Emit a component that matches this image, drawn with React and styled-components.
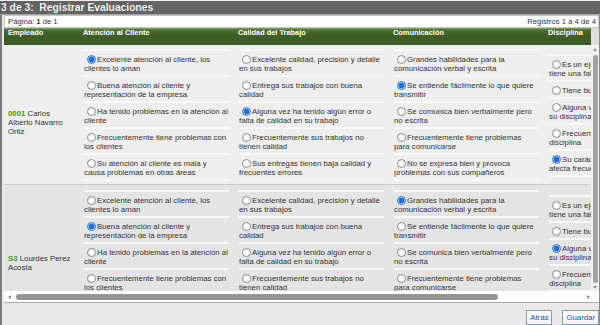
import React from 'react';
import styled, { createGlobalStyle } from 'styled-components';

const GlobalStyle = createGlobalStyle`
  html, body {
    margin: 0;
    padding: 0;
    background: #e9e9e9;
  }
  body {
    font-family: "Liberation Sans", Arial, sans-serif;
  }
`;

// UI COMPONENTS
const Page = styled.div`
  width: 600px;
  height: 325px;
  overflow: hidden;
  display: flex;
  flex-direction: column;
  background: #e9e9e9;
  border-top: 1px solid #f2f2f2;
  box-sizing: border-box;
`;

const TitleBar = styled.h1`
  margin: 0;
  height: 13px;
  padding-left: 1px;
  background: #656565;
  border-bottom: 1px solid #a3a3a3;
  color: #fff;
  font-size: 10.3px;
  font-weight: bold;
  line-height: 13px;
  white-space: nowrap;
  text-shadow: 0 0 1px #222;
`;

const Panel = styled.div`
  flex: 1;
  min-height: 0;
  display: flex;
  flex-direction: column;
  border-left: 2px solid #7b7b7b;
  border-right: 1px solid #8a8a8a;
  padding-left: 2px;
`;

const Pager = styled.div`
  height: 15px;
  display: flex;
  align-items: center;
  justify-content: space-between;
  padding: 0 2px 0 3px;
  background: #fff;
  border: 1px solid #c6c6c6;
  color: #333;
  font-size: 7.7px;

  b {
    font-weight: bold;
  }
`;

const GridFrame = styled.div`
  display: grid;
  grid-template-columns: 587px 8px;
  grid-template-rows: 17px 246px 11px;
  border-bottom: 1px solid #a8a8a8;
`;

const HeaderViewport = styled.div`
  overflow: hidden;
  background: linear-gradient(#8ca872 0, #4d7034 2px, #3f6127 6px, #395a22 100%);
`;

const Columns = styled.div`
  display: grid;
  grid-template-columns: 79px repeat(4, 155px);
  width: max-content;
`;

const HeadCell = styled.div`
  display: flex;
  align-items: center;
  padding-left: ${(p) => p.$pad || 0}px;
  color: #fff;
  font-size: 7.4px;
  font-weight: bold;
  white-space: nowrap;
`;

const Corner = styled.div`
  background: #dedede;
`;

const BodyViewport = styled.div`
  overflow: hidden;
  background: #eeeeee;
`;

const Row = styled(Columns)`
  background: ${(p) => (p.$alt ? '#e4e4e4' : '#eeeeee')};
  border-top: ${(p) => (p.$alt ? '1px solid #c9c9c9' : 'none')};
  padding: ${(p) => (p.$alt ? '5px' : '4px')} 0 3px;
`;

const EmployeeCell = styled.div`
  display: flex;
  align-items: center;
  padding: 14px 10px 0 4px;
  color: #333;
  font-size: 7.8px;
  line-height: 9px;

  b {
    color: #3a9a2c;
    font-weight: bold;
  }
`;

const OptionList = styled.div`
  width: 145px;
  margin-left: 1px;
  display: flex;
  flex-direction: column;
  justify-content: center;
`;

const Option = styled.label`
  display: block;
  padding: 4px 0 2px;
  border-top: 2px solid #f8f8f8;
  color: #333;
  font-size: 7.8px;
  line-height: 9px;
  white-space: nowrap;

  &:last-child {
    border-bottom: 2px solid #f8f8f8;
  }
`;

const Radio = styled.span`
  display: inline-block;
  width: 9px;
  height: 9px;
  margin: 0 1px 0 3px;
  vertical-align: -2px;
  box-sizing: border-box;
  border-radius: 50%;
  border: 1px solid ${(p) => (p.$checked ? '#3b78b8' : '#8c8c8c')};
  background: ${(p) =>
    p.$checked
      ? 'radial-gradient(circle, #1b6fdc 0 2.4px, #9cc3ee 3px, #e6f0fb 100%)'
      : 'radial-gradient(circle, #ffffff 0 2px, #ececec 100%)'};
`;

const VScroll = styled.div`
  display: flex;
  flex-direction: column;
  align-items: center;
  background: #f1f1f1;
  padding: 3px 0 2px;
`;

const Thumb = styled.div`
  background: #959595;
  border-radius: 3px;
`;

const VThumb = styled(Thumb)`
  width: 5px;
  flex: 1;
  margin: 4px 0 3px;
  background: #a2a2a2;
`;

const Arrow = styled.span`
  width: 0;
  height: 0;
  border: 2.5px solid transparent;
  ${(p) => p.$dir === 'up' && 'border-bottom: 3px solid #8d8d8d; border-top: 0;'}
  ${(p) => p.$dir === 'down' && 'border-top: 3px solid #8d8d8d; border-bottom: 0;'}
  ${(p) => p.$dir === 'left' && 'border-right: 3px solid #8d8d8d; border-left: 0;'}
  ${(p) => p.$dir === 'right' && 'border-left: 3px solid #8d8d8d; border-right: 0;'}
`;

const HScroll = styled.div`
  grid-column: 1 / span 2;
  display: flex;
  align-items: center;
  background: #fff;
  padding: 0 9px 0 4px;
`;

const HTrack = styled.div`
  flex: 1;
  padding: 0 4px 0 5px;
`;

const HThumb = styled(Thumb)`
  height: 6px;
  width: 85%;
`;

const Footer = styled.div`
  flex: 1;
  display: flex;
  justify-content: flex-end;
  align-items: flex-start;
  gap: 10px;
  padding-top: 7px;
`;

const Button = styled.button`
  height: 15px;
  padding: 0 3px;
  background: linear-gradient(#ffffff, #f1f1f1);
  border: 1px solid #7f9db9;
  color: #2553a3;
  font-family: inherit;
  font-size: 7.8px;
  line-height: 12px;
  cursor: pointer;
`;

// UI DATA
const criteria = [
  {
    title: 'Atención al Cliente',
    options: [
      ['Excelente atención al cliente, los', 'clientes lo aman'],
      ['Buena atención al cliente y', 'representación de la empresa'],
      ['Ha tenido problemas en la atención al', 'cliente'],
      ['Frecuentemente tiene problemas con', 'los clientes'],
      ['Su atención al cliente es mala y', 'causa problemas en otras áreas'],
    ],
  },
  {
    title: 'Calidad del Trabajo',
    options: [
      ['Excelente calidad, precisión y detalle', 'en sus trabajos'],
      ['Entrega sus trabajos con buena', 'calidad'],
      ['Alguna vez ha tenido algún error o', 'falta de calidad en su trabajo'],
      ['Frecuentemente sus trabajos no', 'tienen calidad'],
      ['Sus entregas tienen baja calidad y', 'frecuentes errores'],
    ],
  },
  {
    title: 'Comunicación',
    options: [
      ['Grandes habilidades para la', 'comunicación verbal y escrita'],
      ['Se entiende fácilmente lo que quiere', 'transmitir'],
      ['Se comunica bien verbalmente pero', 'no escrita'],
      ['Frecuentemente tiene problemas', 'para comunicarse'],
      ['No se expresa bien y provoca', 'problemas con sus compañeros'],
    ],
  },
  {
    title: 'Disciplina',
    options: [
      ['Es un ejemplo de disciplina, nunca', 'tiene una falta'],
      ['Tiene buena disciplina'],
      ['Alguna vez ha tenido problemas con', 'su disciplina'],
      ['Frecuentemente tiene problemas de', 'disciplina'],
      ['Su carácter y falta de disciplina', 'afecta frecuentemente al equipo'],
    ],
  },
];

const employees = [
  { id: 1, code: '0001', name: 'Carlos Alberto Navarro Ortiz', answers: [0, 2, 1, 4] },
  { id: 2, code: 'S3', name: 'Lourdes Perez Acosta', answers: [1, 4, 0, 2] },
];

function App() {
  return (
    <>
      <GlobalStyle />
      <Page>
        <TitleBar>3 de 3:&nbsp; Registrar Evaluaciones</TitleBar>

        <Panel>
          <Pager>
            <span>
              Página: <b>1</b> de 1
            </span>
            <span>Registros 1 a 4 de 4</span>
          </Pager>

          <GridFrame>
            <HeaderViewport>
              <Columns>
                <HeadCell $pad={4}>Empleado</HeadCell>
                {criteria.map((c) => (
                  <HeadCell key={c.title}>{c.title}</HeadCell>
                ))}
              </Columns>
            </HeaderViewport>
            <Corner />

            <BodyViewport>
              {employees.map((emp, i) => (
                <Row key={emp.id} $alt={i % 2 === 1}>
                  <EmployeeCell>
                    <span>
                      <b>{emp.code}</b> {emp.name}
                    </span>
                  </EmployeeCell>

                  {criteria.map((c, ci) => (
                    <OptionList key={c.title}>
                      {c.options.map((lines, oi) => (
                        <Option key={oi}>
                          <Radio $checked={emp.answers[ci] === oi} />
                          {lines[0]}
                          {lines[1] && (
                            <>
                              <br />
                              {lines[1]}
                            </>
                          )}
                        </Option>
                      ))}
                    </OptionList>
                  ))}
                </Row>
              ))}
            </BodyViewport>

            <VScroll>
              <Arrow $dir='up' />
              <VThumb />
              <Arrow $dir='down' />
            </VScroll>

            <HScroll>
              <Arrow $dir='left' />
              <HTrack>
                <HThumb />
              </HTrack>
              <Arrow $dir='right' />
            </HScroll>
          </GridFrame>

          <Footer>
            <Button>Atrás</Button>
            <Button>Guardar</Button>
          </Footer>
        </Panel>
      </Page>
    </>
  );
}

export default App;
